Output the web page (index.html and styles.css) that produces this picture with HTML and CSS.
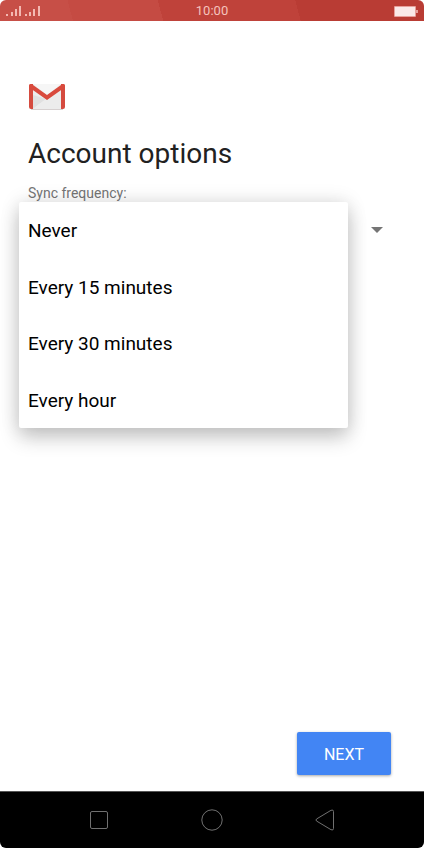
FILE: index.html
```html
<!DOCTYPE html>
<html lang="en">
<head>
<meta charset="utf-8">
<meta name="viewport" content="width=device-width, initial-scale=1">
<title>Account options</title>
<link rel="stylesheet" href="styles.css">
</head>
<body>
<div class="screen">
  <header class="status-bar">
    <svg class="signal" width="36" height="12" viewBox="0 0 36 12" aria-hidden="true">
      <path d="M0 9h2v2H0zM5 7h2v4H5zM9 4h2v7H9zM13 1h2v10h-2zM19 9h2v2h-2zM23 7h2v4h-2zM27 4h2v7h-2zM32 1h2v10h-2z"/>
    </svg>
    <time class="clock">10:00</time>
    <svg class="battery" width="24" height="11" viewBox="0 0 24 11" aria-hidden="true">
      <path class="battery-shell" d="M1 0h20q1 0 1 1v3h2v3h-2v3q0 1-1 1H1q-1 0-1-1V1q0-1 1-1z"/>
      <path class="battery-level" d="M1 1h20v9H1z"/>
    </svg>
  </header>

  <main class="content">
    <svg class="logo" width="36" height="28" viewBox="0 0 36 28" role="img" aria-label="Gmail">
      <path fill="#ececec" d="M3 1h30v25H3z"/>
      <path fill="#e0e0e0" d="M4 26V12l14 4-8 5z"/>
      <path fill="#ececec" d="M4 26l14-11 14 11z"/>
      <path fill="#f6f6f6" d="M4 1h28L18 12z"/>
      <path fill="#d54b3f" d="M0 3q0-2 2-2h2v25H2q-2 0-2-2zM32 1h2q2 0 2 2v21q0 2-2 2h-2z"/>
      <path fill="#d94a3d" d="M0 3Q0 1 2 1q1 0 2 1l14 10L32 2q1-1 2-1 2 0 2 2 0 1-1 2L18 17 1 5Q0 4 0 3z"/>
      <path fill="#d6d0d0" d="M2 26h32v1H2z"/>
    </svg>
    <h1 class="title">Account options</h1>
    <div class="field">
      <span class="label" id="sync-label">Sync frequency:</span>
      <div class="picker">
        <button class="trigger" type="button" aria-haspopup="listbox" aria-expanded="true" aria-labelledby="sync-label">
          <svg width="12" height="6" viewBox="0 0 12 6" aria-hidden="true"><path d="M0 0h12L6 6z"/></svg>
        </button>
        <div class="menu" role="listbox" aria-labelledby="sync-label">
          <button class="option" type="button" role="option">Never</button>
          <button class="option" type="button" role="option">Every 15 minutes</button>
          <button class="option" type="button" role="option">Every 30 minutes</button>
          <button class="option" type="button" role="option">Every hour</button>
        </div>
      </div>
    </div>
    <button class="next" type="button">NEXT</button>
  </main>

  <nav class="nav-bar">
    <button class="nav-button" type="button" aria-label="Recent apps">
      <svg width="24" height="24" viewBox="0 0 24 24"><rect x="3.5" y="3.5" width="17" height="17" rx="1.5"/></svg>
    </button>
    <button class="nav-button" type="button" aria-label="Home">
      <svg width="24" height="24" viewBox="0 0 24 24"><circle cx="12" cy="12" r="10.2"/></svg>
    </button>
    <button class="nav-button" type="button" aria-label="Back">
      <svg width="24" height="24" viewBox="0 0 24 24"><path d="M3.500 11L18 2.300q2.500-1 2.500 1.200v17q0 2.200-2.500 1.200L3.500 13q-1-1 0-2z"/></svg>
    </button>
  </nav>
</div>
</body>
</html>
```

FILE: styles.css
```css
* {
  box-sizing: border-box;
}

body {
  margin: 0;
  background: #fff;
  font-family: Roboto, "Liberation Sans", sans-serif;
}

button {
  margin: 0;
  padding: 0;
  border: 0;
  background: none;
  font: inherit;
  cursor: pointer;
}

svg {
  display: block;
}

.screen {
  display: flex;
  flex-direction: column;
  min-height: 100vh;
  overflow: hidden;
  border-radius: 6px;
}

.status-bar {
  display: grid;
  grid-template-columns: 1fr auto 1fr;
  align-items: center;
  height: 21px;
  padding: 0 6px;
  background: linear-gradient(75deg, #c74f47 0 17%, #c54b43 17% 38%, #bf423a 38% 70%, #b93c34 70%);
}

.signal {
  fill: #f3b9b2;
}

.clock {
  color: #f5c3bd;
  font-size: 13px;
  line-height: 22px;
}

.battery {
  justify-self: end;
}

.battery-shell {
  fill: #e7a09b;
}

.battery-level {
  fill: #fae9e8;
}

.content {
  display: flex;
  flex: 1;
  flex-direction: column;
  padding: 62px 28px 16px;
}

.logo {
  margin-left: 1px;
}

.title {
  margin: 25px 0 0;
  color: #212121;
  font-size: 28px;
  font-weight: 400;
  line-height: 36px;
}

.field {
  margin-top: 13px;
}

.label {
  display: block;
  color: #757575;
  font-size: 14px;
  line-height: 17px;
}

.picker {
  position: relative;
}

.trigger {
  display: flex;
  align-items: center;
  justify-content: flex-end;
  width: 100%;
  height: 56px;
  padding-right: 13px;
  fill: #757575;
}

.menu {
  position: absolute;
  top: 0;
  left: -9px;
  right: 48px;
  display: grid;
  grid-template-rows: repeat(4, 1fr);
  height: 226px;
  border-radius: 2px;
  background: #fff;
  box-shadow: 0 10px 20px rgb(0 0 0 / 20%), 0 0 20px rgb(0 0 0 / 12%);
}

.option {
  padding: 2px 9px 0;
  color: #000;
  font-size: 19px;
  line-height: 24px;
  text-align: left;
}

.next {
  align-self: flex-end;
  height: 43px;
  margin-top: auto;
  margin-right: 5px;
  padding: 1px 27px 0;
  border-radius: 2px;
  background: #4285f4;
  box-shadow: 0 1px 3px rgb(0 0 0 / 35%);
  color: #fff;
  font-size: 16px;
}

.nav-bar {
  display: flex;
  align-items: center;
  justify-content: center;
  gap: 89px;
  height: 57px;
  border-top: 1px solid #555;
  background: #000;
}

.nav-button svg {
  fill: none;
  stroke: #707070;
}
```
